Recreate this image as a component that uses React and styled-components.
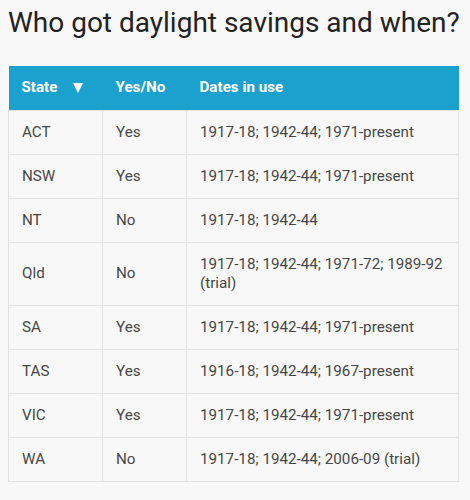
import React from "react";
import styled, { createGlobalStyle } from "styled-components";

const Global = createGlobalStyle`
  html, body { margin: 0; padding: 0; background: #f8f8f8; }
  body { font-family: Roboto, "Liberation Sans", sans-serif; }
`;

const Page = styled.div`
  padding: 8px;
`;

const Title = styled.h1`
  margin: 0;
  font-size: 28px;
  line-height: 30px;
  font-weight: 400;
  color: #222;
  white-space: nowrap;
`;

const Table = styled.table`
  margin-top: 28px;
  width: 450px;
  border-collapse: collapse;
  table-layout: fixed;
  font-size: 15.2px;
  line-height: 19px;
`;

const HeadCell = styled.th`
  background: #1ba1cd;
  color: #fff;
  font-weight: 700;
  text-align: left;
  padding: 0 13px;
  height: 44px;
  box-sizing: border-box;
  width: ${(p) => p.$w}px;
`;

const HeadInner = styled.span`
  display: inline-flex;
  align-items: center;
  gap: 16px;
`;

const Arrow = styled.span`
  display: inline-block;
  width: 0;
  height: 0;
  border-left: 5.5px solid transparent;
  border-right: 5.5px solid transparent;
  border-top: 10px solid #fff;
  margin-top: 1px;
`;

const Cell = styled.td`
  border: 1px solid #e2e2e2;
  padding: 12px 13px;
  color: #474747;
  vertical-align: middle;
`;

const rows = [
  ["ACT", "Yes", "1917-18; 1942-44; 1971-present"],
  ["NSW", "Yes", "1917-18; 1942-44; 1971-present"],
  ["NT", "No", "1917-18; 1942-44"],
  ["Qld", "No", "1917-18; 1942-44; 1971-72; 1989-92 (trial)"],
  ["SA", "Yes", "1917-18; 1942-44; 1971-present"],
  ["TAS", "Yes", "1916-18; 1942-44; 1967-present"],
  ["VIC", "Yes", "1917-18; 1942-44; 1971-present"],
  ["WA", "No", "1917-18; 1942-44; 2006-09 (trial)"],
];

export default function App() {
  return (
    <Page>
      <Global />
      <Title>Who got daylight savings and when?</Title>
      <Table>
        <thead>
          <tr>
            <HeadCell $w={94}>
              <HeadInner>
                State
                <Arrow />
              </HeadInner>
            </HeadCell>
            <HeadCell $w={84}>Yes/No</HeadCell>
            <HeadCell $w={272}>Dates in use</HeadCell>
          </tr>
        </thead>
        <tbody>
          {rows.map((r) => (
            <tr key={r[0]}>
              <Cell>{r[0]}</Cell>
              <Cell>{r[1]}</Cell>
              <Cell>{r[2]}</Cell>
            </tr>
          ))}
        </tbody>
      </Table>
    </Page>
  );
}
